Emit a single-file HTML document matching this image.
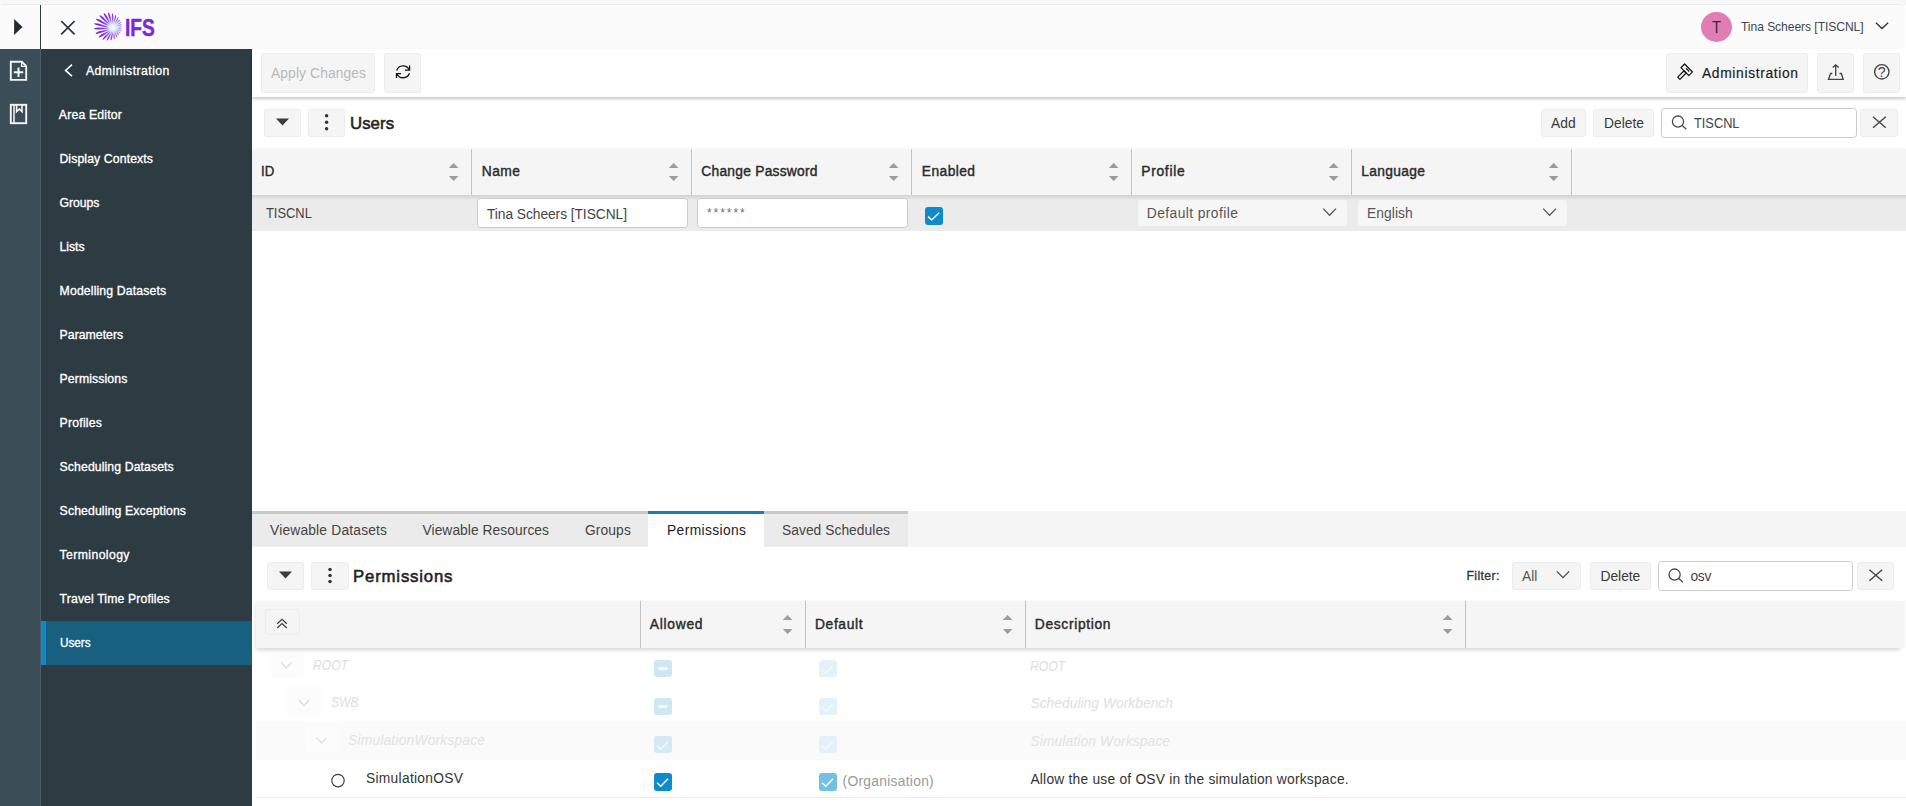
<!DOCTYPE html>
<html lang="en"><head><meta charset="utf-8"><title>IFS Administration - Users</title>
<style>
*{box-sizing:border-box;margin:0;padding:0}
html,body{width:1906px;height:806px;overflow:hidden;background:#fff;font-family:"Liberation Sans",sans-serif}
div,span,svg{position:absolute}
.t{white-space:pre;line-height:1;transform-origin:0 50%}
.btn{background:#f5f5f5;border:1px solid #ececec;border-radius:3px}
.inp{background:#fff;border:1px solid #cbcbcb;border-radius:3.5px}
.hdr{background:#f5f5f5;box-shadow:0 2px 4px rgba(0,0,0,.17)}
.sep{width:1px;background:#c2c2c2}
.cb{width:18px;height:18px;border-radius:3px}
.sa{width:10px;height:18px}

</style></head>
<body>
<header class="app-header">
<!-- top bar -->
<div style="left:0;top:0;width:1906px;height:5px;background:#f6f6f6"></div>
<div style="left:0;top:4px;width:1905px;height:45px;background:#fbfbfb;border-top:1px solid #ebebeb;border-radius:6px 6px 0 0"></div>
<div style="left:40px;top:5px;width:1px;height:44px;background:#2d3b43"></div>
<svg style="left:0;top:0" width="260" height="49" viewBox="0 0 260 49">
  <polygon points="14.1,18.9 14.1,35.1 22.5,27" fill="#252a30"/>
  <path d="M61.2 21 L74.6 34.4 M74.6 21 L61.2 34.4" stroke="#2c333a" stroke-width="1.75" fill="none"/>
</svg>
<svg style="left:90px;top:9px" width="36" height="36" viewBox="90 9 36 36">
<defs><radialGradient id="lg" gradientUnits="userSpaceOnUse" cx="113.4" cy="27.4" r="20">
<stop offset="0" stop-color="#ffffff"/><stop offset="0.1" stop-color="#e4efff"/><stop offset="0.22" stop-color="#b7c8fb"/><stop offset="0.4" stop-color="#9a57ec"/><stop offset="0.6" stop-color="#8431dd"/><stop offset="1" stop-color="#6d25c9"/></radialGradient>
<radialGradient id="lg2" gradientUnits="userSpaceOnUse" cx="113.4" cy="27.4" r="5.6">
<stop offset="0" stop-color="#fff" stop-opacity="1"/><stop offset="0.4" stop-color="#e8f2ff" stop-opacity=".7"/><stop offset="1" stop-color="#cfe0ff" stop-opacity="0"/></radialGradient></defs>
<path d="M114.90 27.41L117.23 27.54L120.16 28.22L121.49 28.69L121.74 29.00L121.39 29.20L119.98 29.15L117.14 28.25ZM114.84 27.80L117.14 28.55L119.84 29.99L121.03 30.81L121.19 31.18L120.80 31.29L119.42 30.86L116.86 29.22ZM114.69 28.16L116.87 29.58L119.21 31.76L120.20 32.92L120.25 33.33L119.84 33.34L118.55 32.53L116.41 30.18ZM114.45 28.47L116.39 30.62L118.21 33.53L118.93 35.02L118.85 35.44L118.43 35.36L117.31 34.14L115.74 31.11ZM114.14 28.71L115.65 31.64L116.75 35.24L117.09 37.05L116.88 37.44L116.47 37.26L115.62 35.63L114.82 31.99ZM113.77 28.85L114.59 32.60L114.74 36.77L114.59 38.84L114.25 39.17L113.86 38.89L113.42 36.86L113.61 32.73ZM113.39 28.90L113.18 33.36L112.13 37.90L111.36 40.13L110.91 40.35L110.57 39.98L110.68 37.62L112.08 33.21ZM113.00 28.84L111.44 33.76L109.00 38.35L107.51 40.57L106.98 40.64L106.70 40.17L107.52 37.63L110.30 33.28ZM112.64 28.69L109.50 33.62L105.58 37.82L103.34 39.78L102.77 39.68L102.58 39.13L104.21 36.63L108.41 32.79ZM112.33 28.45L107.56 32.82L102.28 36.13L99.36 37.57L98.81 37.29L98.75 36.67L101.17 34.49L106.66 31.65ZM112.09 28.14L105.93 31.35L99.60 33.29L96.20 33.97L95.73 33.52L95.82 32.88L98.92 31.31L105.33 29.90ZM111.95 27.77L104.87 29.35L98.03 29.59L94.44 29.36L94.09 28.79L94.35 28.17L97.88 27.43L104.66 27.74ZM111.90 27.39L104.59 27.07L97.87 25.53L94.43 24.36L94.25 23.72L94.66 23.18L98.29 23.38L104.80 25.45ZM111.96 27.00L105.14 24.86L99.16 21.68L96.20 19.71L96.19 19.05L96.72 18.65L100.10 19.76L105.75 23.37ZM112.11 26.64L106.40 23.01L101.67 18.60L99.44 16.06L99.58 15.44L100.18 15.21L103.01 17.05L107.34 21.79ZM112.35 26.33L108.16 21.75L104.96 16.64L103.57 13.83L103.84 13.28L104.44 13.24L106.54 15.57L109.29 20.88ZM112.66 26.09L110.11 21.17L108.49 15.91L107.94 13.12L108.30 12.68L108.85 12.80L110.14 15.33L111.32 20.67ZM113.03 25.95L111.99 21.22L111.81 16.26L111.98 13.73L112.39 13.40L112.85 13.67L113.38 16.14L113.15 21.06ZM113.41 25.90L113.61 21.73L114.61 17.40L115.33 15.29L115.77 15.07L116.09 15.44L115.99 17.67L114.66 21.87ZM113.80 25.96L114.90 22.54L116.76 19.03L117.87 17.39L118.31 17.28L118.49 17.70L117.90 19.58L115.77 22.90ZM114.16 26.11L115.85 23.50L118.31 20.86L119.64 19.72L120.07 19.69L120.11 20.13L119.17 21.61L116.53 24.02ZM114.47 26.35L116.51 24.51L119.33 22.75L120.77 22.06L121.18 22.13L121.09 22.54L119.92 23.62L116.99 25.14ZM114.71 26.66L116.94 25.53L119.93 24.61L121.39 24.34L121.76 24.50L121.57 24.86L120.25 25.55L117.22 26.22ZM114.85 27.03L117.17 26.54L120.19 26.43L121.62 26.54L121.93 26.79L121.65 27.07L120.26 27.39L117.26 27.25Z" fill="url(#lg)"/>
<circle cx="113.4" cy="27.4" r="5.6" fill="url(#lg2)"/>
</svg>
<!-- avatar -->
<div style="left:1701px;top:12px;width:31px;height:30px;border-radius:50%;background:#e07db3"></div>
<svg style="left:1870px;top:18px" width="24" height="18" viewBox="0 0 24 18"><path d="M5.9 4.7 L12 10.6 L18.1 4.7" stroke="#2f3840" stroke-width="1.4" fill="none"/></svg>
<span class="t" style="left:124.8px;top:16px;font-size:24.29px;color:#7b2bd6;font-weight:700;-webkit-text-stroke:0.5px #7b2bd6;transform:scaleX(0.7888);">IFS</span>
<span class="t" style="left:1712.0px;top:19px;font-size:16.1px;color:#2d2d4d;transform:scaleX(0.9143);">T</span>
<span class="t" style="left:1741.0px;top:21px;font-size:12.05px;color:#3a4750;letter-spacing:-0.041px;">Tina Scheers [TISCNL]</span>
</header>
<nav class="sidebar">
<!-- left strip + sidebar -->
<div style="left:0;top:49px;width:41px;height:757px;background:#3b4e57"></div>
<div style="left:40px;top:49px;width:1px;height:757px;background:#4b5f69"></div>
<div style="left:41px;top:49px;width:211px;height:757px;background:#2d3b43"></div>
<div style="left:41px;top:621px;width:211px;height:44px;background:#17607f;border-left:5px solid #1289c7"></div>
<svg style="left:0;top:49px" width="41" height="90" viewBox="0 49 41 90" fill="none" stroke="#f4f6f8" stroke-width="1.9">
  <path d="M10.8 61.8 H21.8 L26.2 66.2 V79.9 H10.8 Z"/>
  <path d="M21.6 61.8 V66.4 H26.2" stroke-width="1.3"/>
  <path d="M18.5 67.5 V77 M13.8 72.3 H23.2" stroke-width="2"/>
  <rect x="10.8" y="104.8" width="15.4" height="18.4"/>
  <path d="M14 104.8 V123.2" stroke-width="1.5"/>
  <path d="M16.6 105 V111.6 L19.3 109 L22 111.6 V105" stroke-width="1.6"/>
</svg>
<svg style="left:60px;top:60px" width="20" height="20" viewBox="60 60 20 20"><path d="M72 64.6 L65.6 70.4 L72 76.2" stroke="#fff" stroke-width="1.6" fill="none"/></svg>
<span class="t" style="left:86.0px;top:65px;font-size:12.24px;color:#ffffff;-webkit-text-stroke:0.33px #ffffff;letter-spacing:0.451px;">Administration</span>
<span class="t" style="left:58.8px;top:109px;font-size:12.24px;color:#ffffff;-webkit-text-stroke:0.33px #ffffff;letter-spacing:0.190px;">Area Editor</span>
<span class="t" style="left:59.4px;top:153px;font-size:12.24px;color:#ffffff;-webkit-text-stroke:0.33px #ffffff;letter-spacing:0.120px;">Display Contexts</span>
<span class="t" style="left:59.6px;top:197px;font-size:12.24px;color:#ffffff;-webkit-text-stroke:0.33px #ffffff;letter-spacing:-0.045px;">Groups</span>
<span class="t" style="left:59.6px;top:241px;font-size:12.24px;color:#ffffff;-webkit-text-stroke:0.33px #ffffff;letter-spacing:-0.064px;">Lists</span>
<span class="t" style="left:59.6px;top:285px;font-size:12.24px;color:#ffffff;-webkit-text-stroke:0.33px #ffffff;letter-spacing:0.144px;">Modelling Datasets</span>
<span class="t" style="left:59.6px;top:329px;font-size:12.24px;color:#ffffff;-webkit-text-stroke:0.33px #ffffff;letter-spacing:0.041px;">Parameters</span>
<span class="t" style="left:59.6px;top:373px;font-size:12.24px;color:#ffffff;-webkit-text-stroke:0.33px #ffffff;letter-spacing:0.106px;">Permissions</span>
<span class="t" style="left:59.6px;top:417px;font-size:12.24px;color:#ffffff;-webkit-text-stroke:0.33px #ffffff;letter-spacing:0.215px;">Profiles</span>
<span class="t" style="left:59.6px;top:461px;font-size:12.24px;color:#ffffff;-webkit-text-stroke:0.33px #ffffff;letter-spacing:0.105px;">Scheduling Datasets</span>
<span class="t" style="left:59.6px;top:505px;font-size:12.24px;color:#ffffff;-webkit-text-stroke:0.33px #ffffff;letter-spacing:0.130px;">Scheduling Exceptions</span>
<span class="t" style="left:59.6px;top:549px;font-size:12.24px;color:#ffffff;-webkit-text-stroke:0.33px #ffffff;letter-spacing:0.393px;">Terminology</span>
<span class="t" style="left:59.6px;top:593px;font-size:12.24px;color:#ffffff;-webkit-text-stroke:0.33px #ffffff;letter-spacing:0.129px;">Travel Time Profiles</span>
<span class="t" style="left:59.6px;top:637px;font-size:12.24px;color:#ffffff;-webkit-text-stroke:0.33px #ffffff;transform:scaleX(0.9577);">Users</span>
</nav>
<section class="toolbar">
<!-- toolbar -->
<div style="left:252px;top:49px;width:1654px;height:48px;background:#fff;box-shadow:0 2px 3px rgba(0,0,0,.22)"></div>
<div class="btn" style="left:261px;top:53px;width:114px;height:39.6px"></div>
<div class="btn" style="left:384px;top:53px;width:37px;height:39.6px"></div>
<div class="btn" style="left:1666px;top:53px;width:142px;height:39.6px"></div>
<div class="btn" style="left:1817px;top:53px;width:37px;height:39.6px"></div>
<div class="btn" style="left:1863px;top:53px;width:37px;height:39.6px"></div>
<svg style="left:384px;top:53px" width="37" height="39" viewBox="384 53 37 39" fill="none" stroke="#151515" stroke-width="1.3">
<path d="M396.7 70.5 A6.7 6.7 0 0 1 409.2 70"/><path d="M409.6 65.6 V70.1 H405"/>
<path d="M409.4 73.2 A6.7 6.7 0 0 1 396.9 73.7"/><path d="M396.5 78.1 V73.6 H401.1"/>
</svg>
<svg style="left:1670px;top:56px" width="30" height="32" viewBox="1670 56 30 32" fill="none" stroke="#151515" stroke-width="1.25" stroke-linejoin="round">
<g transform="translate(1686.7,69.8) rotate(45)"><rect x="-5.6" y="-2.6" width="11.2" height="5.2"/><rect x="-1.2" y="2.6" width="3.1" height="8.9"/><path d="M-1.6 -0.6 H3" stroke-width="1.1"/></g>
</svg>
<svg style="left:1817px;top:53px" width="37" height="39" viewBox="1817 53 37 39" fill="none" stroke="#444" stroke-width="1.35">
<path d="M1835.7 76 V65 M1832.7 67.6 L1835.7 64.8 L1838.8 67.6"/>
<path d="M1832.3 73.5 H1830.6 L1828.5 79.3 H1843.2 L1841.3 73.5 H1839.5"/>
</svg>
<svg style="left:1863px;top:53px" width="37" height="39" viewBox="1863 53 37 39">
<circle cx="1881.8" cy="71.8" r="7.2" fill="none" stroke="#444" stroke-width="1.35"/>
<text x="1881.8" y="76.9" text-anchor="middle" font-family="Liberation Sans, sans-serif" font-size="14.2" fill="#444">?</text>
</svg>
<span class="t" style="left:271.0px;top:67px;font-size:13.8px;color:#b9b9b9;letter-spacing:0.118px;">Apply Changes</span>
<span class="t" style="left:1702.0px;top:67px;font-size:13.8px;color:#1c1c1c;-webkit-text-stroke:0.18px #1c1c1c;letter-spacing:0.660px;">Administration</span>
</section>
<section class="users-panel">
<!-- users panel -->
<div class="btn" style="left:264px;top:109px;width:37px;height:28px"></div>
<div class="btn" style="left:308px;top:109px;width:37px;height:28px"></div>
<svg style="left:264px;top:109px" width="90" height="28" viewBox="264 109 90 28">
  <polygon points="276,118.6 289,118.6 282.5,125.6" fill="#3c3c3c"/>
  <circle cx="326.6" cy="115.7" r="1.7" fill="#333"/><circle cx="326.6" cy="122.2" r="1.7" fill="#333"/><circle cx="326.6" cy="128.7" r="1.7" fill="#333"/>
</svg>
<div class="btn" style="left:1541px;top:109px;width:45px;height:28px"></div>
<div class="btn" style="left:1593px;top:109px;width:61px;height:28px"></div>
<div class="inp" style="left:1661px;top:108px;width:196px;height:30px"></div>
<div class="btn" style="left:1860px;top:109px;width:38px;height:28px"></div>
<svg style="left:1661px;top:108px" width="240" height="30" viewBox="1661 108 240 30" fill="none" stroke="#484848" stroke-width="1.3">
  <circle cx="1678" cy="121.6" r="5.6"/><path d="M1682.2 125.6 L1686.3 129.2"/>
  <path d="M1873 116.8 L1885.8 127.8 M1885.8 116.8 L1873 127.8" stroke-width="1.5"/>
</svg>

<div class="hdr" style="left:252px;top:149px;width:1654px;height:46px"></div>
<div style="left:252px;top:195px;width:1654px;height:36px;background:#ebebeb"></div>
<div style="left:252px;top:195px;width:1654px;height:5px;background:linear-gradient(rgba(0,0,0,.11),rgba(0,0,0,0))"></div>
<div class="sep" style="left:471px;top:149px;height:46px"></div>
<div class="sep" style="left:691px;top:149px;height:46px"></div>
<div class="sep" style="left:911px;top:149px;height:46px"></div>
<div class="sep" style="left:1131px;top:149px;height:46px"></div>
<div class="sep" style="left:1351px;top:149px;height:46px"></div>
<div class="sep" style="left:1571px;top:149px;height:46px"></div>
<svg style="left:252px;top:149px" width="1654" height="46" viewBox="252 149 1654 46" fill="#9c9c9c"><polygon points="448.8,168.0 458.5,168.0 453.6,163.0"/><polygon points="448.8,175.9 458.5,175.9 453.6,180.9"/><polygon points="668.8,168.0 678.5,168.0 673.6,163.0"/><polygon points="668.8,175.9 678.5,175.9 673.6,180.9"/><polygon points="888.8,168.0 898.5,168.0 893.6,163.0"/><polygon points="888.8,175.9 898.5,175.9 893.6,180.9"/><polygon points="1108.8,168.0 1118.5,168.0 1113.7,163.0"/><polygon points="1108.8,175.9 1118.5,175.9 1113.7,180.9"/><polygon points="1328.8,168.0 1338.5,168.0 1333.7,163.0"/><polygon points="1328.8,175.9 1338.5,175.9 1333.7,180.9"/><polygon points="1548.8,168.0 1558.5,168.0 1553.7,163.0"/><polygon points="1548.8,175.9 1558.5,175.9 1553.7,180.9"/></svg>
<div class="inp" style="left:477px;top:198px;width:211px;height:30px"></div>
<div class="inp" style="left:697px;top:198px;width:211px;height:30px"></div>
<div class="cb" style="left:925px;top:207px;background:#0f8acb"></div>
<svg style="left:925px;top:207px" width="18" height="18" viewBox="0 0 18 18"><path d="M3 9.6 L6.8 12.9 L14.2 5.8" stroke="#fff" stroke-width="1.4" fill="none"/></svg>
<div style="left:1138px;top:200px;width:209px;height:26px;background:#f6f6f6;border-radius:3px"></div>
<div style="left:1358px;top:200px;width:209px;height:26px;background:#f6f6f6;border-radius:3px"></div>
<svg style="left:1320px;top:204px" width="20" height="16" viewBox="0 0 20 16"><path d="M3.2 4.6 L9.6 11.2 L16 4.6" stroke="#555" stroke-width="1.3" fill="none"/></svg>
<svg style="left:1540px;top:204px" width="20" height="16" viewBox="0 0 20 16"><path d="M3.2 4.6 L9.6 11.2 L16 4.6" stroke="#555" stroke-width="1.3" fill="none"/></svg>
<span class="t" style="left:350.0px;top:116px;font-size:16.74px;color:#222;-webkit-text-stroke:0.55px #222;letter-spacing:0.074px;">Users</span>
<span class="t" style="left:1551.0px;top:117px;font-size:13.8px;color:#3a3a3a;letter-spacing:0.069px;">Add</span>
<span class="t" style="left:1604.0px;top:117px;font-size:13.8px;color:#3a3a3a;letter-spacing:0.022px;">Delete</span>
<span class="t" style="left:1693.5px;top:117px;font-size:13.8px;color:#444;transform:scaleX(0.9271);">TISCNL</span>
<span class="t" style="left:261.3px;top:165px;font-size:13.8px;color:#2b2b2b;-webkit-text-stroke:0.42px #2b2b2b;transform:scaleX(0.9557);">ID</span>
<span class="t" style="left:481.8px;top:165px;font-size:13.8px;color:#2b2b2b;-webkit-text-stroke:0.42px #2b2b2b;letter-spacing:0.462px;">Name</span>
<span class="t" style="left:701.3px;top:165px;font-size:13.8px;color:#2b2b2b;-webkit-text-stroke:0.42px #2b2b2b;letter-spacing:0.246px;">Change Password</span>
<span class="t" style="left:921.8px;top:165px;font-size:13.8px;color:#2b2b2b;-webkit-text-stroke:0.42px #2b2b2b;letter-spacing:0.427px;">Enabled</span>
<span class="t" style="left:1141.3px;top:165px;font-size:13.8px;color:#2b2b2b;-webkit-text-stroke:0.42px #2b2b2b;letter-spacing:0.698px;">Profile</span>
<span class="t" style="left:1361.3px;top:165px;font-size:13.8px;color:#2b2b2b;-webkit-text-stroke:0.42px #2b2b2b;letter-spacing:0.330px;">Language</span>
<span class="t" style="left:266.0px;top:207px;font-size:13.8px;color:#444;transform:scaleX(0.9332);">TISCNL</span>
<span class="t" style="left:487.0px;top:208px;font-size:13.8px;color:#444;letter-spacing:-0.067px;">Tina Scheers [TISCNL]</span>
<span class="t" style="left:707.0px;top:207px;font-size:12.14px;color:#6e6e6e;letter-spacing:1.897px;">******</span>
<span class="t" style="left:1146.8px;top:207px;font-size:13.8px;color:#555;letter-spacing:0.426px;">Default profile</span>
<span class="t" style="left:1367.0px;top:207px;font-size:13.8px;color:#555;letter-spacing:0.072px;">English</span>
</section>
<section class="tabs">
<!-- tabs -->
<div style="left:252px;top:511px;width:1654px;height:36px;background:#f5f5f5"></div>
<div style="left:252px;top:511px;width:396px;height:36px;background:#ebebeb;border-top:3px solid #c9c9c9"></div>
<div style="left:648px;top:511px;width:116px;height:36px;background:#fff;border-top:3px solid #1580b5"></div>
<div style="left:764px;top:511px;width:144px;height:36px;background:#ebebeb;border-top:3px solid #c9c9c9"></div>
<span class="t" style="left:270.0px;top:524px;font-size:13.8px;color:#444;letter-spacing:0.186px;">Viewable Datasets</span>
<span class="t" style="left:422.5px;top:524px;font-size:13.8px;color:#444;letter-spacing:0.057px;">Viewable Resources</span>
<span class="t" style="left:585.0px;top:524px;font-size:13.8px;color:#444;letter-spacing:0.110px;">Groups</span>
<span class="t" style="left:667.0px;top:524px;font-size:13.8px;color:#222;letter-spacing:0.386px;">Permissions</span>
<span class="t" style="left:782.0px;top:524px;font-size:13.8px;color:#444;letter-spacing:0.044px;">Saved Schedules</span>
</section>
<section class="permissions-panel">
<!-- permissions panel -->
<div class="btn" style="left:267px;top:562px;width:37px;height:28px"></div>
<div class="btn" style="left:311px;top:562px;width:38px;height:28px"></div>
<svg style="left:267px;top:562px" width="90" height="28" viewBox="267 562 90 28">
  <polygon points="279,571.6 292,571.6 285.5,578.6" fill="#3c3c3c"/>
  <circle cx="330" cy="569.4" r="1.75" fill="#333"/><circle cx="330" cy="575.5" r="1.75" fill="#333"/><circle cx="330" cy="581.5" r="1.75" fill="#333"/>
</svg>
<div class="btn" style="left:1512px;top:562px;width:69px;height:28px"></div>
<div class="btn" style="left:1590px;top:562px;width:61px;height:28px"></div>
<div class="inp" style="left:1658px;top:561px;width:195px;height:30px"></div>
<div class="btn" style="left:1857px;top:562px;width:37px;height:28px"></div>
<svg style="left:1550px;top:561px" width="350" height="30" viewBox="1550 561 350 30" fill="none" stroke="#484848" stroke-width="1.3">
  <path d="M1556.8 571.4 L1563 577.6 L1569.2 571.4"/>
  <circle cx="1674.6" cy="574.6" r="5.6"/><path d="M1678.8 578.6 L1682.9 582.2"/>
  <path d="M1869.4 569.8 L1882.2 580.8 M1882.2 569.8 L1869.4 580.8" stroke-width="1.5"/>
</svg>

<div class="hdr" style="left:256px;top:601px;width:1644px;height:47px"></div><div style="left:1899px;top:601px;width:5.5px;height:47px;background:#f5f5f5"></div>
<div style="left:256px;top:722px;width:1650px;height:38px;background:#fafafa"></div>
<div style="left:256px;top:797px;width:1650px;height:1px;background:#ececec"></div>
<div class="sep" style="left:640px;top:601px;height:47px"></div>
<div class="sep" style="left:805px;top:601px;height:47px"></div>
<div class="sep" style="left:1025px;top:601px;height:47px"></div>
<div class="sep" style="left:1465px;top:601px;height:47px"></div>
<svg style="left:256px;top:601px" width="1645" height="47" viewBox="256 601 1645 47" fill="#9c9c9c"><polygon points="782.8,620.0 792.5,620.0 787.6,614.9"/><polygon points="782.8,629.0 792.5,629.0 787.6,634.1"/><polygon points="1002.8,620.0 1012.5,620.0 1007.6,614.9"/><polygon points="1002.8,629.0 1012.5,629.0 1007.6,634.1"/><polygon points="1442.8,620.0 1452.5,620.0 1447.7,614.9"/><polygon points="1442.8,629.0 1452.5,629.0 1447.7,634.1"/></svg>
<div class="btn" style="left:265px;top:609px;width:35px;height:26px"></div>
<svg style="left:265px;top:609px" width="35" height="27" viewBox="265 609 35 27"><path d="M277.2 623.7 L282 619.2 L286.8 623.7 M277.2 628 L282 623.5 L286.8 628" stroke="#3a3a3a" stroke-width="1.2" fill="none"/></svg>
<div style="left:269.5px;top:652px;width:34px;height:25px;background:#fcfcfc;border-radius:3px"></div>
<div style="left:287px;top:686.5px;width:34px;height:28px;background:#fcfcfc;border-radius:3px"></div>
<div style="left:304.5px;top:724px;width:34px;height:28px;background:#fcfcfc;border-radius:3px"></div>
<svg style="left:256px;top:648px" width="200" height="158" viewBox="256 648 200 158" fill="none" stroke="#dfdfdf" stroke-width="1.4"><path d="M281 662.6 L286.2 668.0 L291.4 662.6"/><path d="M298.8 700.1 L304.0 705.5 L309.2 700.1"/><path d="M316.3 737.6 L321.5 743.0 L326.7 737.6"/><circle cx="338" cy="780.6" r="6.2" stroke="#3c3c3c" stroke-width="1.15"/></svg>
<div class="cb" style="left:654px;top:660px;height:17.4px;background:#cfe6f3"></div><svg style="left:654px;top:660px" width="18" height="18" viewBox="0 0 18 18"><path d="M4.4 8.6 H13.2" stroke="#fff" stroke-width="2.6" fill="none"/></svg>
<div class="cb" style="left:654px;top:698px;height:17.4px;background:#cfe6f3"></div><svg style="left:654px;top:698px" width="18" height="18" viewBox="0 0 18 18"><path d="M4.4 8.6 H13.2" stroke="#fff" stroke-width="2.6" fill="none"/></svg>
<div class="cb" style="left:654px;top:735.5px;height:17.4px;background:#d5e9f4"></div><svg style="left:654px;top:735.5px" width="18" height="18" viewBox="0 0 18 18"><path d="M3 9.8 L6.8 13.2 L14 5.8" stroke="#f4fafd" stroke-width="1.4" fill="none"/></svg>
<div class="cb" style="left:654px;top:773px;height:18px;background:#0f8acb"></div><svg style="left:654px;top:773px" width="18" height="18" viewBox="0 0 18 18"><path d="M3 9.8 L6.8 13.2 L14 5.8" stroke="#fff" stroke-width="1.4" fill="none"/></svg>
<div class="cb" style="left:819.3px;top:660px;height:17.4px;background:#e3f1f8"></div><svg style="left:819.3px;top:660px" width="18" height="18" viewBox="0 0 18 18"><path d="M3 9.8 L6.8 13.2 L14 5.8" stroke="#f4fafd" stroke-width="1.4" fill="none"/></svg>
<div class="cb" style="left:819.3px;top:698px;height:17.4px;background:#e3f1f8"></div><svg style="left:819.3px;top:698px" width="18" height="18" viewBox="0 0 18 18"><path d="M3 9.8 L6.8 13.2 L14 5.8" stroke="#f4fafd" stroke-width="1.4" fill="none"/></svg>
<div class="cb" style="left:819.3px;top:735.5px;height:17.4px;background:#e3f1f8"></div><svg style="left:819.3px;top:735.5px" width="18" height="18" viewBox="0 0 18 18"><path d="M3 9.8 L6.8 13.2 L14 5.8" stroke="#f4fafd" stroke-width="1.4" fill="none"/></svg>
<div class="cb" style="left:819.3px;top:773px;height:18px;background:#74c0e4"></div><svg style="left:819.3px;top:773px" width="18" height="18" viewBox="0 0 18 18"><path d="M3 9.8 L6.8 13.2 L14 5.8" stroke="#fff" stroke-width="1.4" fill="none"/></svg>
<span class="t" style="left:353.0px;top:569px;font-size:16.74px;color:#222;-webkit-text-stroke:0.55px #222;letter-spacing:0.836px;">Permissions</span>
<span class="t" style="left:1466.4px;top:570px;font-size:12.24px;color:#333;-webkit-text-stroke:0.3px #333;letter-spacing:0.418px;">Filter:</span>
<span class="t" style="left:1522.0px;top:570px;font-size:13.8px;color:#555;letter-spacing:0.028px;">All</span>
<span class="t" style="left:1600.5px;top:570px;font-size:13.8px;color:#3a3a3a;letter-spacing:-0.018px;">Delete</span>
<span class="t" style="left:1690.4px;top:570px;font-size:13.8px;color:#444;letter-spacing:-0.292px;">osv</span>
<span class="t" style="left:649.8px;top:618px;font-size:13.8px;color:#2b2b2b;-webkit-text-stroke:0.42px #2b2b2b;letter-spacing:0.729px;">Allowed</span>
<span class="t" style="left:815.0px;top:618px;font-size:13.8px;color:#2b2b2b;-webkit-text-stroke:0.42px #2b2b2b;letter-spacing:0.630px;">Default</span>
<span class="t" style="left:1034.8px;top:618px;font-size:13.8px;color:#2b2b2b;-webkit-text-stroke:0.42px #2b2b2b;letter-spacing:0.668px;">Description</span>
<span class="t" style="left:313.0px;top:659px;font-size:13.8px;color:#dedede;font-style:italic;transform:scaleX(0.8781);">ROOT</span>
<span class="t" style="left:330.5px;top:696px;font-size:13.8px;color:#dedede;font-style:italic;transform:scaleX(0.8748);">SWB</span>
<span class="t" style="left:348.0px;top:734px;font-size:13.8px;color:#e2e2e2;font-style:italic;letter-spacing:0.199px;">SimulationWorkspace</span>
<span class="t" style="left:366.0px;top:772px;font-size:13.8px;color:#333;letter-spacing:0.286px;">SimulationOSV</span>
<span class="t" style="left:1030.4px;top:660px;font-size:13.8px;color:#dedede;font-style:italic;transform:scaleX(0.8856);">ROOT</span>
<span class="t" style="left:1030.4px;top:697px;font-size:13.8px;color:#dedede;font-style:italic;letter-spacing:0.037px;">Scheduling Workbench</span>
<span class="t" style="left:1030.4px;top:735px;font-size:13.8px;color:#e2e2e2;font-style:italic;letter-spacing:0.123px;">Simulation Workspace</span>
<span class="t" style="left:842.5px;top:775px;font-size:13.8px;color:#9a9a9a;letter-spacing:0.291px;">(Organisation)</span>
<span class="t" style="left:1030.4px;top:773px;font-size:13.8px;color:#333;letter-spacing:0.223px;">Allow the use of OSV in the simulation workspace.</span>
</section>
</body></html>
